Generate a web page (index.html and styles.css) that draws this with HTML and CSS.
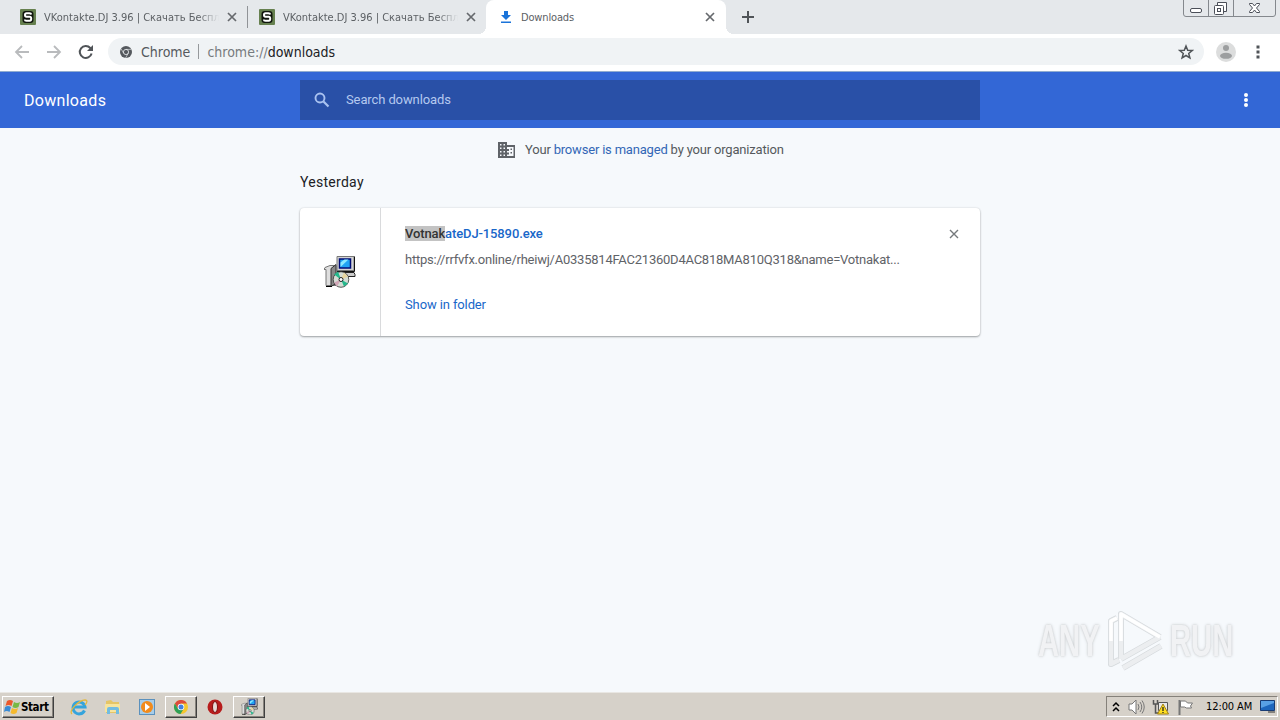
FILE: index.html
```html
<!DOCTYPE html>
<html lang="en">
  <head>
    <meta charset="UTF-8" />
    <meta name="viewport" content="width=device-width, initial-scale=1.0" />
    <title>Downloads</title>
    <link rel="stylesheet" href="styles.css">
  </head>
  <body>
    <!-- shared icons -->
    <svg class="defs" width="0" height="0">
      <symbol id="close" viewBox="0 0 10 10">
        <path d="M1 1L9 9M9 1L1 9" fill="none" stroke="currentColor" />
      </symbol>
      <symbol id="site" viewBox="0 0 16 16">
        <rect width="16" height="16" rx="1" fill="#66804f" />
        <rect x="2.500" y="2" width="11" height="12" rx="3" fill="#10150d" />
        <path d="M11.200 5.500Q11 4.300 9.500 4.300H6.500Q5 4.300 5 6T6.500 7.700H9.700Q11.200 7.700 11.200 9.700T9.700 11.800H6.500Q4.900 11.800 4.800 10.500" fill="none" stroke="#fff" stroke-width="2" />
      </symbol>
      <symbol id="installer" viewBox="0 0 32 32">
        <path d="M1 12l5-2h6v20H2V14H0z" fill="#dedede" stroke="#777" />
        <path d="M7 13l5-4v19l-5 3z" fill="#888" stroke="#333" />
        <path d="M2 31h6" stroke="#000" />
        <path d="M13 1h17v14H13z" fill="#d4d4d4" stroke="#777" />
        <path d="M30.500 1v15H13" fill="none" stroke="#111" />
        <path d="M15.500 3.500h11v9h-11z" fill="#20a4f4" stroke="#000c76" stroke-width="1.500" />
        <path d="M16.500 11.500V7l4-3h4z" fill="#8aeaff" />
        <path d="M15 17h15l1 2v2H18z" fill="#ccc" stroke="#222" />
        <circle cx="17" cy="24" r="7.800" fill="#d5dcd4" stroke="#333" stroke-width=".8" />
        <path d="M17 24L10 19l4-3zM17 24l7 4-4 3z" fill="#25b78c" />
        <path d="M17 24l3-7 4 4z" fill="#e8d6a0" />
        <path d="M17 24l-7 3 3 4z" fill="#d0a6b6" />
        <circle cx="17" cy="24" r="2" fill="#fff" stroke="#222" />
      </symbol>
    </svg>

    <div class="tabstrip">
      <div class="tab">
        <svg class="favicon" width="16" height="16"><use href="#site" /></svg>
        <span class="tab-title fade">VKontakte.DJ 3.96 | Скачать Беспл</span>
        <svg class="tab-close" width="10" height="10"><use href="#close" /></svg>
      </div>
      <div class="tab second">
        <svg class="favicon" width="16" height="16"><use href="#site" /></svg>
        <span class="tab-title fade">VKontakte.DJ 3.96 | Скачать Беспл</span>
        <svg class="tab-close" width="10" height="10"><use href="#close" /></svg>
      </div>
      <div class="tab active">
        <svg class="favicon" width="16" height="16" viewBox="0 0 16 16"><path d="M6 2h4v4h3l-5 5-5-5h3zM3 12.500h10V14H3z" fill="#1a73d9" /></svg>
        <span class="tab-title">Downloads</span>
        <svg class="tab-close" width="10" height="10"><use href="#close" /></svg>
      </div>
      <svg class="new-tab" width="12" height="12"><path d="M6 0v12M0 6h12" stroke="#505458" stroke-width="2" /></svg>
      <svg class="window-buttons" width="94" height="18" viewBox="0 0 94 18">
        <path d="M.500 0v14q0 2.500 2.500 2.500h87q2.500 0 2.500-2.500V0M25.500 0v16M50.500 0v16" fill="none" stroke="#84888d" />
        <g fill="none" stroke="#4b4f58">
          <rect x="7.500" y="8.500" width="11" height="4" rx="1.500" fill="#fff" />
          <path d="M34.500 5.500v-3h9v9h-3" fill="#fff" />
          <rect x="31.500" y="5.500" width="9" height="9" rx="1" fill="#fff" />
          <rect x="34.500" y="8.500" width="3" height="3" />
          <path d="M66.500 3.500h3l2 2.500 2-2.500h3v1l-3 3.500 3 3.500v1h-3l-2-2.500-2 2.500h-3v-1l3-3.500-3-3.500z" fill="#fff" />
        </g>
      </svg>
    </div>

    <div class="toolbar">
      <svg class="nav-icon" width="16" height="16" viewBox="0 0 16 16"><path d="M15 8H2M8 2L2 8l6 6" fill="none" stroke="#b9bbbd" stroke-width="1.800" /></svg>
      <svg class="nav-icon" width="16" height="16" viewBox="0 0 16 16"><path d="M1 8h13M8 2l6 6-6 6" fill="none" stroke="#b9bbbd" stroke-width="1.800" /></svg>
      <svg class="nav-icon" width="16" height="16" viewBox="0 0 16 16"><path d="M13.600 9.500A6 6 0 1 1 12.300 4L14 5.700" fill="none" stroke="#505458" stroke-width="2" /><path d="M15 1v6H9z" fill="#505458" /></svg>
      <div class="omnibox">
        <svg width="12" height="12" viewBox="0 0 12 12"><circle cx="6" cy="6" r="6" fill="#55595e" /><circle cx="6" cy="6" r="2.600" fill="none" stroke="#f0f3f5" stroke-width=".8" /><path d="M6 3.400h5.300M3.700 7.300L1.200 3M8.200 7.300L5.600 12" stroke="#f0f3f5" stroke-width=".6" /></svg>
        <span class="origin">Chrome</span>
        <span class="divider"></span>
        <span class="scheme">chrome://</span><span class="host">downloads</span>
        <svg class="star" width="16" height="16" viewBox="0 0 16 16"><path d="M8 2l1.700 4.200 4.500.3-3.500 2.900 1.200 4.500L8 11.500l-3.900 2.400 1.200-4.500-3.500-2.900 4.500-.3z" fill="none" stroke="#505458" stroke-width="1.500" /></svg>
      </div>
      <svg class="avatar" width="20" height="20" viewBox="0 0 20 20"><circle cx="10" cy="10" r="10" fill="#dcdddd" /><circle cx="10" cy="6" r="3" fill="#9c9e9f" /><ellipse cx="10" cy="13.800" rx="6" ry="3" fill="#9c9e9f" /></svg>
      <svg class="menu" width="4" height="14" viewBox="0 0 4 14"><path d="M.5.500h3v3h-3zM.5 5.500h3v3h-3zM.5 10.500h3v3h-3z" fill="#505458" /></svg>
    </div>

    <header class="page-header">
      <h1>Downloads</h1>
      <div class="search">
        <svg width="16" height="16" viewBox="0 0 16 16"><circle cx="6" cy="6" r="4.500" fill="none" stroke="#a9c2f0" stroke-width="1.900" /><path d="M9.500 9.500l5 5" stroke="#a9c2f0" stroke-width="2.200" /></svg>
        <span>Search downloads</span>
      </div>
      <svg class="more" width="4" height="14" viewBox="0 0 4 14"><g fill="#fff"><circle cx="2" cy="2" r="2" /><circle cx="2" cy="7" r="2" /><circle cx="2" cy="12" r="2" /></g></svg>
    </header>

    <main class="content">
      <div class="managed">
        <svg width="18" height="16" viewBox="0 0 18 16"><path fill-rule="evenodd" d="M0 0h9v3h8v13H0zM2 2v1.500h1.500V2zM5.500 2v1.500H7V2zM2 5.500V7h1.500V5.500zM5.500 5.500V7H7V5.500zM2 9v1.500h1.500V9zM5.500 9v1.500H7V9zM2 12.500V14h1.500v-1.500zM5.500 12.500V14H7v-1.500zM9 5v2h2v2H9v1.500h2v2H9V14h6.500V5zM12.500 6.500H14V8h-1.500zM12.500 10H14v1.500h-1.500z" fill="#5f6368" /></svg>
        <span>Your <a>browser is managed</a> by your organization</span>
      </div>
      <h2>Yesterday</h2>
      <div class="card">
        <div class="file-icon"><svg width="32" height="33" viewBox="0 0 32 33"><use href="#installer" width="32" height="33" /></svg></div>
        <div class="details">
          <div class="name"><mark>Votnak</mark>ateDJ-15890.exe</div>
          <div class="url">https://rrfvfx.online/rheiwj/A0335814FAC21360D4AC818MA810Q318&amp;name=Votnakat...</div>
          <a class="show">Show in folder</a>
        </div>
        <svg class="remove" width="10" height="10"><use href="#close" /></svg>
      </div>
    </main>

    <div class="watermark">
      <span>ANY</span>
      <svg width="60" height="64" viewBox="0 0 60 64">
        <g fill="none" stroke-linejoin="round">
          <path d="M11 9L5 12v43l8-4M15 50V5l39 23M15 50l39-22M17 59l38-22" stroke="#d5d9dc" stroke-width="6" />
          <path d="M11 9L5 12v43l8-4M15 50V5l39 23M15 50l39-22M17 59l38-22" stroke="#eceef0" stroke-width="4.500" />
          <path d="M5 32V12l6-3M15 32V5l39 23" stroke="#fff" stroke-width="3.500" />
        </g>
      </svg>
      <span>RUN</span>
    </div>

    <div class="taskbar">
      <div class="start">
        <svg width="17" height="16" viewBox="0 0 17 16"><path d="M3 2q3-2 6 0L7.500 7q-3-2-6 0z" fill="#ec582b" /><path d="M10 3q3 2 6 0l-1.500 5q-3 2-6 0z" fill="#77b944" /><path d="M1 8q3-2 6 0l-1.500 5q-3-2-5.500 0z" fill="#398bd5" /><path d="M8 9q3 2 6 0l-1.500 5q-3 2-6 0z" fill="#f5b92d" /></svg>
        <span>Start</span>
      </div>
      <div class="task ie">
        <svg width="18" height="18" viewBox="0 0 18 18"><path d="M14.500 12.500A6 6 0 1 1 15 9H4" fill="none" stroke="#35a4dc" stroke-width="3" /><path d="M2 16C-2 13 9 2 15 2c3 0 2 3 0 5" fill="none" stroke="#e3b83d" stroke-width="1.300" /></svg>
      </div>
      <div class="task">
        <svg width="18" height="18" viewBox="0 0 18 18"><path d="M2 3l5-1 2 2h6v11H2z" fill="#e5c566" /><path d="M1 6h15v8H1z" fill="#f7e49d" /><path d="M3 16v-5q0-2 2-2h8q2 0 2 2v5h-3v-4H6v4z" fill="#72bce1" /></svg>
      </div>
      <div class="task">
        <svg width="18" height="18" viewBox="0 0 18 18"><rect x="1.500" y="1.500" width="15" height="15" fill="#a7cde9" stroke="#5b91bd" /><circle cx="9" cy="9" r="6" fill="#f28b1c" /><path d="M7 5l5 4-5 4z" fill="#fff" /></svg>
      </div>
      <div class="task raised">
        <svg width="14" height="14" viewBox="0 0 14 14"><circle cx="7" cy="7" r="7" fill="#f5c62e" /><path d="M.9 3.500A7 7 0 0 1 13.100 3.500H7L4 8.700z" fill="#dd4a3c" /><path d="M.9 3.500A7 7 0 0 0 6.500 14l3.200-5.300H4z" fill="#2fa058" /><circle cx="7" cy="7" r="3.300" fill="#fff" /><circle cx="7" cy="7" r="2.500" fill="#427fe0" /></svg>
      </div>
      <div class="task">
        <svg width="16" height="16" viewBox="0 0 16 16"><circle cx="8" cy="8" r="7.500" fill="#b71c1c" /><ellipse cx="8" cy="8" rx="2.500" ry="5.500" fill="#e7d9d5" stroke="#7d0f10" /></svg>
      </div>
      <div class="task raised">
        <svg width="17" height="17"><use href="#installer" /></svg>
      </div>
      <div class="tray">
        <svg width="8" height="12" viewBox="0 0 8 12"><path d="M1 5l3-3 3 3M1 10l3-3 3 3" fill="none" stroke="#000" stroke-width="1.500" /></svg>
        <svg class="speaker" width="17" height="16" viewBox="0 0 17 16"><path d="M1 5h3l4-4v14l-4-4H1z" fill="#fff" stroke="#777" /><path d="M10 5q2 3 0 6M12 3q3.500 5 0 10M14 1.500q4.500 6.500 0 13" fill="none" stroke="#777" /></svg>
        <svg class="network" width="17" height="16" viewBox="0 0 17 16"><path d="M6.500 3.500h9v8h-9z" fill="#e8e8e8" stroke="#555" /><path d="M1.500 1v4h4V1M3.500 5v9h5" fill="none" stroke="#555" stroke-width="1.500" /><path d="M11 5l5.500 10H5.500z" fill="#ffdf20" stroke="#a28014" /><path d="M11 8v4M11 13v1" stroke="#222" stroke-width="1.300" /></svg>
        <svg class="flag" width="17" height="16" viewBox="0 0 17 16"><path d="M2.500 1v15" stroke="#777" stroke-width="2" /><path d="M3.500 2h5l2 2h5l-2 3 1 2H9.500l-2-1h-4z" fill="#fff" stroke="#777" /></svg>
        <span class="clock">12:00 AM</span>
        <svg class="desktop" width="15" height="13" viewBox="0 0 15 13"><path d="M.5.500h14v10H.5z" fill="#1e66bd" stroke="#183b74" /><path d="M1 1h13v2L1 8z" fill="#59a0e5" /><path d="M8 12h7" stroke="#333" /></svg>
      </div>
    </div>
  </body>
</html>
```
FILE: styles.css
```css
* {
  box-sizing: border-box;
}
body {
  margin: 0;
  height: 720px;
  overflow: hidden;
  display: flex;
  flex-direction: column;
  background: #f6f9fc;
  font-family: Roboto, sans-serif;
  font-size: 13px;
  white-space: nowrap;
}
svg {
  display: block;
  flex: none;
}
.defs {
  position: absolute;
}

/* Tabs */
.tabstrip {
  display: flex;
  height: 34px;
  flex: none;
  background: #e5e8eb;
  color: #5c6064;
  font-family: "DejaVu Sans Condensed", "DejaVu Sans", sans-serif;
  font-size: 11px;
}
.tab {
  display: flex;
  align-items: center;
  width: 247px;
  height: 34px;
  padding: 0 10px 0 20px;
}
.tab.second {
  width: 239px;
  padding: 0 10px 0 11px;
  border-left: 1px solid #909397;
  border-image: linear-gradient(transparent 7px, #909397 7px, #909397 27px, transparent 27px) 1;
}
.tab.active {
  position: relative;
  width: 240px;
  padding: 0 11px 0 12px;
  border-radius: 8px 8px 0 0;
  background: #fff;
}
.tab.active::before,
.tab.active::after {
  content: "";
  position: absolute;
  bottom: 0;
  width: 8px;
  height: 8px;
}
.tab.active::before {
  left: -8px;
  background: radial-gradient(circle at 0 0, transparent 8px, #fff 8px);
}
.tab.active::after {
  right: -8px;
  background: radial-gradient(circle at 100% 0, transparent 8px, #fff 8px);
}
.tab-title {
  flex: 1;
  margin: 0 8px;
  overflow: hidden;
}
.active .tab-title {
  margin-left: 7px;
  letter-spacing: -0.15px;
}
.fade {
  -webkit-mask-image: linear-gradient(90deg, #000 88%, transparent 100%);
  mask-image: linear-gradient(90deg, #000 88%, transparent 100%);
}
.tab-close {
  color: #66696d;
  stroke-width: 1.7;
}
.new-tab {
  margin: 11px 0 0 16px;
}
.window-buttons {
  margin: 0 3px 0 auto;
}

/* Toolbar */
.toolbar {
  display: flex;
  align-items: center;
  height: 38px;
  flex: none;
  padding: 0 20px 2px 14px;
  background: #fff;
  border-bottom: 1px solid #91add0;
}
.nav-icon {
  margin-right: 16px;
}
.omnibox {
  display: flex;
  align-items: center;
  flex: 1;
  height: 27px;
  margin-left: -2px;
  padding: 0 10px 0 12px;
  border-radius: 14px;
  background: #f0f3f5;
  color: #55595d;
  font-family: "DejaVu Sans Condensed", "DejaVu Sans", sans-serif;
  font-size: 14px;
}
.origin {
  margin-left: 9px;
}
.divider {
  width: 1px;
  height: 15px;
  margin: 0 8px;
  background: #96999c;
}
.scheme {
  color: #777b7e;
}
.host {
  color: #202124;
}
.star {
  margin-left: auto;
}
.avatar {
  margin-left: 12px;
}
.menu {
  margin-left: 20px;
}

/* Page header */
.page-header {
  display: flex;
  align-items: center;
  height: 56px;
  flex: none;
  padding: 0 32px 0 24px;
  background: #3367d6;
  color: #fff;
}
.page-header h1 {
  width: 276px;
  margin: 0;
  font-size: 16px;
  font-weight: 400;
  letter-spacing: 0.3px;
}
.search {
  display: flex;
  align-items: center;
  width: 680px;
  height: 40px;
  padding-left: 14px;
  background: #2950a7;
  color: #b5c9ef;
}
.search span {
  margin-left: 16px;
  padding-bottom: 2px;
  letter-spacing: -0.11px;
}
.more {
  margin-left: auto;
}

/* Downloads list */
.content {
  flex: 1;
  width: 680px;
  margin: 0 auto;
}
.managed {
  display: flex;
  align-items: center;
  height: 44px;
  padding-left: 198px;
  gap: 9px;
  color: #55595d;
  letter-spacing: -0.19px;
}
.managed span {
  padding-bottom: 2px;
}
.managed a {
  color: #3367b6;
}
.content h2 {
  margin: 2px 0 17px;
  font-size: 14px;
  font-weight: 400;
  letter-spacing: 0.28px;
  line-height: 17px;
  color: #202124;
}
.card {
  display: flex;
  height: 128px;
  border-radius: 4px;
  background: #fff;
  box-shadow: 0 1px 2px rgba(60, 64, 67, 0.45), 0 0 2px rgba(60, 64, 67, 0.15);
}
.file-icon {
  display: flex;
  align-items: center;
  width: 81px;
  padding: 0 0 2px 24px;
  border-right: 1px solid #d9dadc;
}
.details {
  flex: 1;
  padding: 18px 0 0 24px;
  line-height: 15px;
}
.name {
  color: #1967c9;
  font-weight: 500;
  letter-spacing: -0.12px;
}
.name mark {
  background: #c3c3c3;
  color: #333;
}
.url {
  margin: 11px 0 30px;
  color: #5f6368;
  letter-spacing: -0.235px;
}
.show {
  color: #1967c9;
  letter-spacing: -0.12px;
}
.remove {
  margin: 21px 21px 0 0;
  color: #75797c;
  stroke-width: 1.4;
}

/* Watermark lies over the page */
.watermark {
  position: absolute;
  top: 609px;
  left: 1038px;
  display: flex;
  align-items: center;
  gap: 4px;
  color: #f1f2f4;
  font-family: "Liberation Sans", sans-serif;
  font-size: 45px;
  font-weight: bold;
  text-shadow: 0 0 4px #c8cbcd, 0 0 2px #d5d7d9;
}
.watermark span {
  width: 64px;
  transform: scaleX(0.65);
  transform-origin: left;
}

/* Taskbar */
.taskbar {
  display: flex;
  align-items: center;
  height: 28px;
  flex: none;
  padding: 0 2px;
  background: #d6d1c9;
  border-top: 1px solid #e9e7e3;
  font-family: "DejaVu Sans Condensed", "DejaVu Sans", sans-serif;
  font-size: 11px;
  color: #000;
}
.start,
.raised {
  border: 1px solid;
  border-color: #fff #404040 #404040 #fff;
  box-shadow: inset -1px -1px #88847e;
}
.start {
  display: flex;
  align-items: center;
  width: 52px;
  height: 22px;
  padding-left: 1px;
  font-size: 11.5px;
  font-weight: bold;
  letter-spacing: -0.4px;
}
.task {
  display: flex;
  align-items: center;
  justify-content: center;
  width: 32px;
  height: 22px;
  margin-right: 2px;
}
.task.ie {
  margin-left: 9px;
}
.tray {
  display: flex;
  align-items: center;
  width: 172px;
  height: 21px;
  margin-left: auto;
  padding-left: 5px;
  border: 1px solid;
  border-color: #85817a #fff #fff #85817a;
}
.speaker,
.flag {
  margin-left: 8px;
}
.network {
  margin-left: 7px;
}
.clock {
  margin-left: 12px;
  letter-spacing: -0.1px;
}
.desktop {
  margin: 0 2px 0 auto;
}
```
